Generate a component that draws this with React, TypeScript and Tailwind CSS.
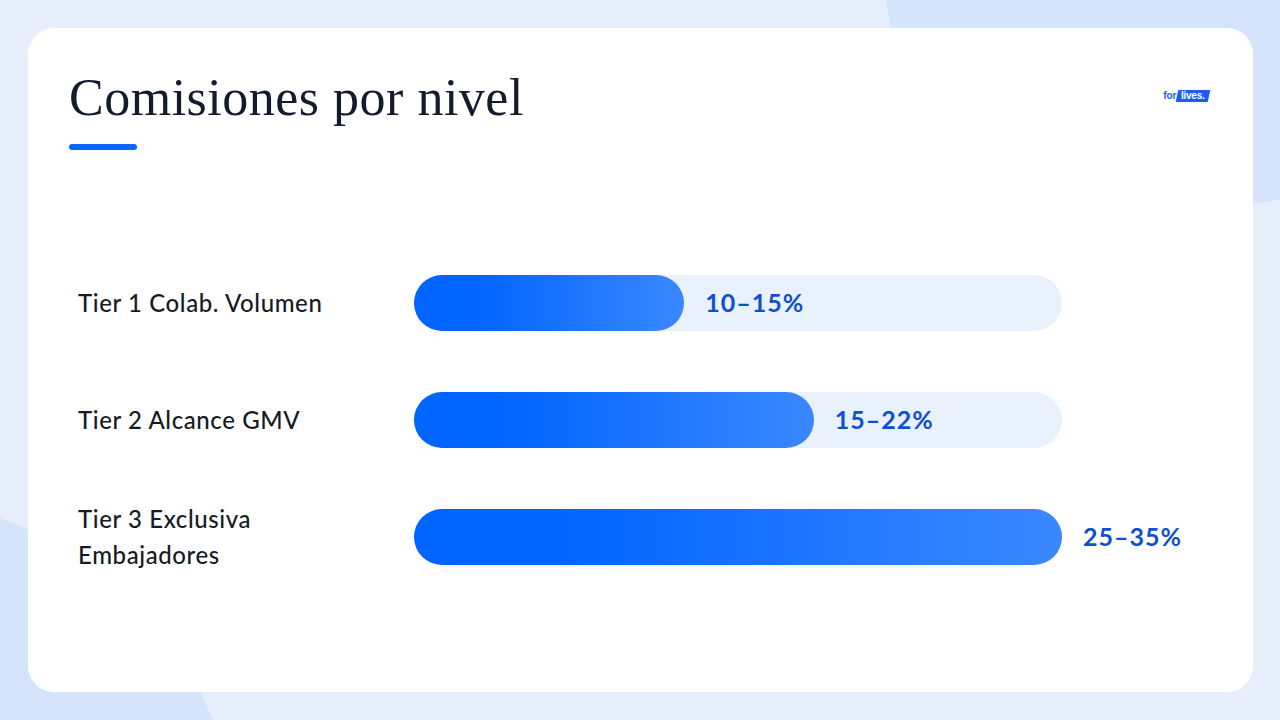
import React from "react";

const TIERS = [
  { label: "Tier 1 Colab. Volumen", range: "10–15%", fill: 41.7 },
  { label: "Tier 2 Alcance GMV", range: "15–22%", fill: 61.7 },
  { label: "Tier 3 Exclusiva Embajadores", range: "25–35%", fill: 100 },
];

const sans = { fontFamily: "Lato, 'Noto Sans', sans-serif" };

function Logo() {
  return (
    <div className="mt-[18px] mr-[3px] flex items-center" style={{ fontFamily: "'Liberation Sans', Arial, sans-serif" }}>
      <span className="text-[10px] font-bold leading-none text-[#1d5cf5]">for</span>
      <span className="ml-[1px] flex h-[12px] -skew-x-12 items-center bg-[#1d5cf5] px-[4px]">
        <span className="skew-x-12 text-[10px] font-bold leading-none tracking-tight text-white">lives.</span>
      </span>
    </div>
  );
}

function TierRow({ label, range, fill }: { label: string; range: string; fill: number }) {
  return (
    <div className="flex h-[56px] items-center pl-[9px]">
      <div
        className="w-[336px] shrink-0 pr-[60px] text-[24px] font-medium leading-[36px] tracking-[0.6px] text-[#171b26]"
        style={sans}
      >
        {label}
      </div>
      <div className="flex h-[56px] w-[648px] shrink-0 items-center rounded-full bg-[#e9f1fd]">
        <div
          className="h-full flex-none rounded-full bg-linear-to-r from-[#0064ff] from-20% via-[#1470ff] to-[#3a88ff]"
          style={{ width: `${fill}%` }}
        />
        <span
          className="ml-[21px] flex-none whitespace-nowrap text-[25px] font-bold tracking-[1px] text-[#0f4fd2]"
          style={sans}
        >
          {range}
        </span>
      </div>
    </div>
  );
}

export default function App() {
  return (
    <div className="relative h-screen w-full overflow-hidden bg-[#e6eefc]">
      {/* background blobs */}
      <svg className="absolute inset-0 h-full w-full" viewBox="0 0 1280 720" preserveAspectRatio="none">
        <path d="M886,0 C895,60 930,170 1010,230 L1280,200 L1280,0 Z" fill="#d6e4fb" />
        <path d="M0,518 L30,530 C120,560 180,600 195,680 L213,720 L0,720 Z" fill="#d6e4fb" />
      </svg>

      <div className="relative h-full pt-[28px] pr-[27px] pb-[28px] pl-[28px]">
        <div className="h-full rounded-[26px] bg-white px-[41px] pt-[44px]">
          <div className="flex items-start justify-between">
            <div>
              <h1
                className="text-[52px] leading-none tracking-[0.5px] text-[#141b2d]"
                style={{ fontFamily: "'Liberation Serif', 'DejaVu Serif', serif" }}
              >
                Comisiones por nivel
              </h1>
              <div className="mt-[20px] h-[6px] w-[68px] rounded-full bg-[#0a66ff]" />
            </div>
            <Logo />
          </div>

          <div className="mt-[125px] flex flex-col gap-[61px]">
            {TIERS.map((t) => (
              <TierRow key={t.label} {...t} />
            ))}
          </div>
        </div>
      </div>
    </div>
  );
}
